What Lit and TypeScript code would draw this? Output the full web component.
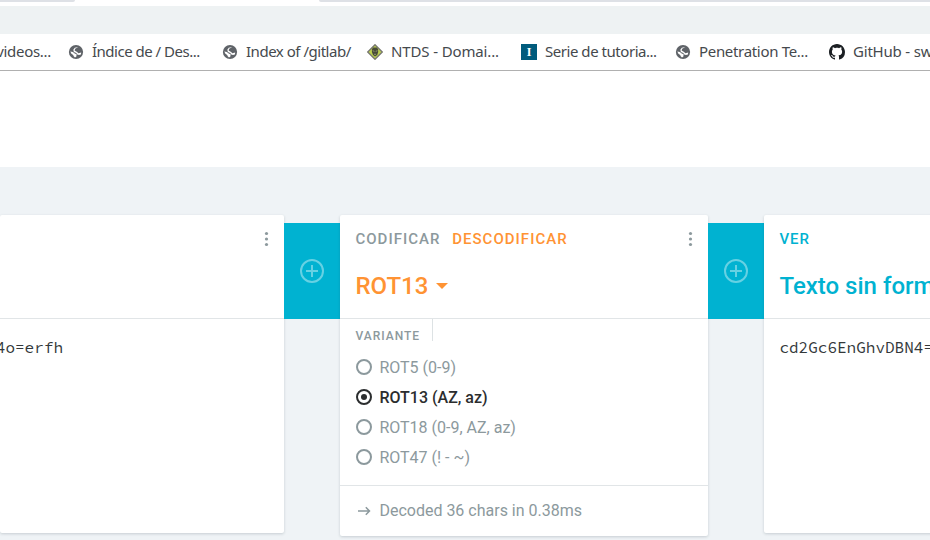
import { LitElement, html, css, svg, nothing } from "lit";
import { customElement, property } from "lit/decorators.js";

const globe = svg`<svg viewBox="0 0 16 16" width="16" height="16">
  <circle cx="8" cy="8" r="7.100" fill="#5f6368"/>
  <path d="M10.300 2.900 7.200 4.700 6.600 6.600 9.100 7.900 10.400 9.200 13.200 8.600 12.900 10.500 11 11 9.300 10.600 8.300 9 5.900 7.900 5.300 5.800 6.800 3.700z" fill="#fff"/>
  <path d="M2.300 7.400 4.900 8 6.700 9.600 8.600 10.300 8.400 12.400 7 13.500 5.700 12.300 5.200 10.900 3.400 9.700z" fill="#fff"/>
</svg>`;
const diamond = svg`<svg viewBox="0 0 16 16" width="16" height="16">
  <path d="M8 .7 15.300 8 8 15.300.7 8z" fill="#bdd14f" stroke="#77776f" stroke-width="1.300"/>
  <path d="M5 5 6.300 3.500h3.400L11 5l.2 3-1 3L8 12.500 6 11 4.900 8z" fill="#484b38"/>
  <path d="M5.700 6.700l1.700.7M10.400 6.700l-1.700.7M7 10.300h2" stroke="#a3a77a" stroke-width=".8"/>
</svg>`;
const letter = html`<span class="letter">I</span>`;
const octocat = svg`<svg viewBox="0 0 16 16" width="16" height="16"><path fill="#1b1f23" d="M8 0C3.580 0 0 3.580 0 8c0 3.540 2.290 6.530 5.470 7.590.4.070.55-.17.55-.38 0-.19-.01-.82-.01-1.490-2.010.37-2.530-.49-2.690-.94-.09-.23-.48-.94-.82-1.130-.28-.15-.68-.52-.01-.53.63-.01 1.080.58 1.230.82.72 1.210 1.870.87 2.330.66.07-.52.28-.87.51-1.070-1.780-.2-3.640-.89-3.640-3.950 0-.87.31-1.590.82-2.150-.08-.2-.36-1.020.08-2.120 0 0 .67-.21 2.200.82.64-.18 1.320-.27 2-.27s1.360.09 2 .27c1.530-1.040 2.200-.82 2.200-.82.44 1.100.16 1.920.08 2.120.51.56.82 1.270.82 2.150 0 3.070-1.870 3.750-3.650 3.950.29.25.54.73.54 1.480 0 1.070-.01 1.930-.01 2.200 0 .21.15.46.55.38A8.010 8.010 0 0 0 16 8c0-4.420-3.580-8-8-8z"/></svg>`;

const bookmarks = [
  { label: "Índice de / Des...", icon: globe, tracking: -0.5 },
  { label: "Index of /gitlab/", icon: globe, tracking: -0.48 },
  { label: "NTDS - Domai...", icon: diamond, tracking: -0.13 },
  { label: "Serie de tutoria...", icon: letter, tracking: -0.46 },
  { label: "Penetration Te...", icon: globe, tracking: -0.32 },
  { label: "GitHub - swisskyrepo", icon: octocat, tracking: -0.2 },
];

@customElement("bookmark-bar")
class BookmarkBar extends LitElement {
  static styles = css`
    :host { display: block; height: 70px; background: #fff; border-bottom: 1px solid #b0b0b0; overflow: hidden; font: 15px/20px "Noto Sans", sans-serif; color: #45494d; }
    .tabs { height: 2px; display: flex; justify-content: space-between; }
    .tab { background: #dee1e6; border-radius: 0 0 6px 0; width: 75px; }
    .tab.right { width: 611px; border-radius: 0 0 0 6px; }
    .address { height: 28px; margin-top: 4px; background: #eef2f3; }
    .row { display: grid; grid-template-columns: 68px 154px 145px 154px 154px 154px 154px; height: 36px; align-items: center; }
    .item { display: flex; align-items: center; gap: 8px; white-space: nowrap; }
    .item svg { flex: none; display: block; }
    .label { padding-bottom: 2px; }
    .first { width: 51px; display: flex; justify-content: flex-end; white-space: nowrap; letter-spacing: -0.3px; padding-bottom: 2px; }
    .letter { flex: none; width: 16px; height: 16px; background: #005b7c; color: #fff; font: bold 12px/16px "Liberation Serif", serif; text-align: center; }
  `;
  render() {
    return html`
      <div class="tabs"><div class="tab"></div><div class="tab right"></div></div>
      <div class="address"></div>
      <div class="row">
        <div class="first">videos...</div>
        ${bookmarks.map((b) => html`<div class="item">${b.icon}<span class="label" style="letter-spacing: ${b.tracking}px">${b.label}</span></div>`)}
      </div>`;
  }
}

@customElement("brick-card")
class BrickCard extends LitElement {
  @property({ type: Boolean }) menu = false;
  static styles = css`
    :host { display: flex; flex-direction: column; box-sizing: border-box; background: #fff; border-radius: 2px; box-shadow: 0 1px 3px rgba(40, 60, 75, 0.2); flex: none; }
    header { height: 103px; border-bottom: 1px solid #e1e5e7; padding: 0 16px 0 15.4px; display: flex; justify-content: space-between; }
    .menu { margin: 16px -1px 0 0; }
  `;
  render() {
    return html`<header>
        <div><slot name="head"></slot></div>
        ${this.menu
          ? html`<svg class="menu" width="5" height="16" viewBox="0 0 5 16" fill="#8c999d"><circle cx="2.500" cy="2.500" r="1.600"/><circle cx="2.500" cy="8" r="1.600"/><circle cx="2.500" cy="13.500" r="1.600"/></svg>`
          : nothing}
      </header><slot></slot>`;
  }
}

@customElement("add-brick")
class AddBrick extends LitElement {
  static styles = css`
    :host { flex: none; width: 56px; height: 96px; margin-top: 8px; background: #00b2d1; display: flex; align-items: center; justify-content: center; }
  `;
  render() {
    return html`<svg width="24" height="24" viewBox="0 0 24 24" fill="none" stroke="#66d1e3" stroke-width="2"><circle cx="12" cy="12" r="11"/><path d="M12 6v12M6 12h12"/></svg>`;
  }
}

const variants = ["ROT5 (0-9)", "ROT13 (AZ, az)", "ROT18 (0-9, AZ, az)", "ROT47 (! - ~)"];

@customElement("app-root")
class AppRoot extends LitElement {
  @property({ type: Number }) selected = 1;
  static styles = css`
    :host { display: block; width: 930px; height: 540px; overflow: hidden; background: #eff3f6; font-family: Roboto, sans-serif; }
    .banner { height: 96px; background: #fff; }
    .pipe { display: flex; align-items: flex-start; margin-top: 48px; }
    .source { width: 284px; height: 318px; }
    .encoder { width: 368px; height: 321px; }
    .view { width: 368px; height: 318px; }
    .modes { display: flex; gap: 11.6px; padding-top: 14px; font: 500 15px/20px Roboto, sans-serif; letter-spacing: 1.03px; color: #8c999d; }
    .active { color: #ff9333; }
    .title { display: flex; align-items: center; gap: 8px; margin-top: 21px; font: 500 24px/32px Roboto, sans-serif; color: #ff9333; white-space: nowrap; }
    .cyan { color: #00b2d1; }
    .mono { font: 16px/24px "Source Code Pro", "Liberation Mono", monospace; color: #33383a; white-space: nowrap; margin: 16px 0 0 15.4px; }
    .source .mono { width: 63px; margin-left: 0; display: flex; justify-content: flex-end; }
    .settings { height: 166px; padding: 0 16px 0 15.4px; border-bottom: 1px solid #e1e5e7; }
    .field { width: 77.6px; height: 22px; border-right: 1px solid #dde2e4; font: 500 12px/35px Roboto, sans-serif; letter-spacing: 1px; color: #8c999d; box-sizing: border-box; }
    .options { padding-top: 11px; }
    .option { display: flex; align-items: center; gap: 7.4px; height: 30px; font-size: 16px; color: #8c999d; padding-left: 0.6px; }
    .option.on { color: #2b2d2e; font-weight: 500; }
    .status { display: flex; align-items: center; gap: 7.4px; height: 50px; padding: 0 16px; font-size: 16px; color: #8c999d; }
    .status span { padding-bottom: 2px; }
  `;
  render() {
    return html`
      <bookmark-bar></bookmark-bar>
      <div class="banner"></div>
      <div class="pipe">
        <brick-card class="source" menu><div class="mono">4o=erfh</div></brick-card>
        <add-brick></add-brick>
        <brick-card class="encoder" menu>
          <div slot="head">
            <div class="modes"><span>CODIFICAR</span><span class="active">DESCODIFICAR</span></div>
            <div class="title">ROT13<svg width="12" height="6" viewBox="0 0 12 6"><path d="M0 0h12L6 6z" fill="currentColor"/></svg></div>
          </div>
          <div class="settings">
            <div class="field">VARIANTE</div>
            <div class="options">
              ${variants.map((v, i) => html`<div class="option ${i === this.selected ? "on" : ""}">
                <svg width="16" height="16" viewBox="0 0 16 16"><circle cx="8" cy="8" r="7" fill="none" stroke="currentColor" stroke-width="2"/>${i === this.selected ? svg`<circle cx="8" cy="8" r="3" fill="currentColor"/>` : nothing}</svg>
                <span>${v}</span></div>`)}
            </div>
          </div>
          <div class="status">
            <svg width="16" height="16" viewBox="0 0 16 16" fill="none" stroke="currentColor" stroke-width="1.500"><path d="M2 8h11.500M9.800 4.300 13.500 8l-3.700 3.700"/></svg>
            <span>Decoded 36 chars in 0.38ms</span>
          </div>
        </brick-card>
        <add-brick></add-brick>
        <brick-card class="view">
          <div slot="head">
            <div class="modes cyan"><span>VER</span></div>
            <div class="title cyan">Texto sin formato</div>
          </div>
          <div class="mono">cd2Gc6EnGhvDBN4=</div>
        </brick-card>
      </div>`;
  }
}
